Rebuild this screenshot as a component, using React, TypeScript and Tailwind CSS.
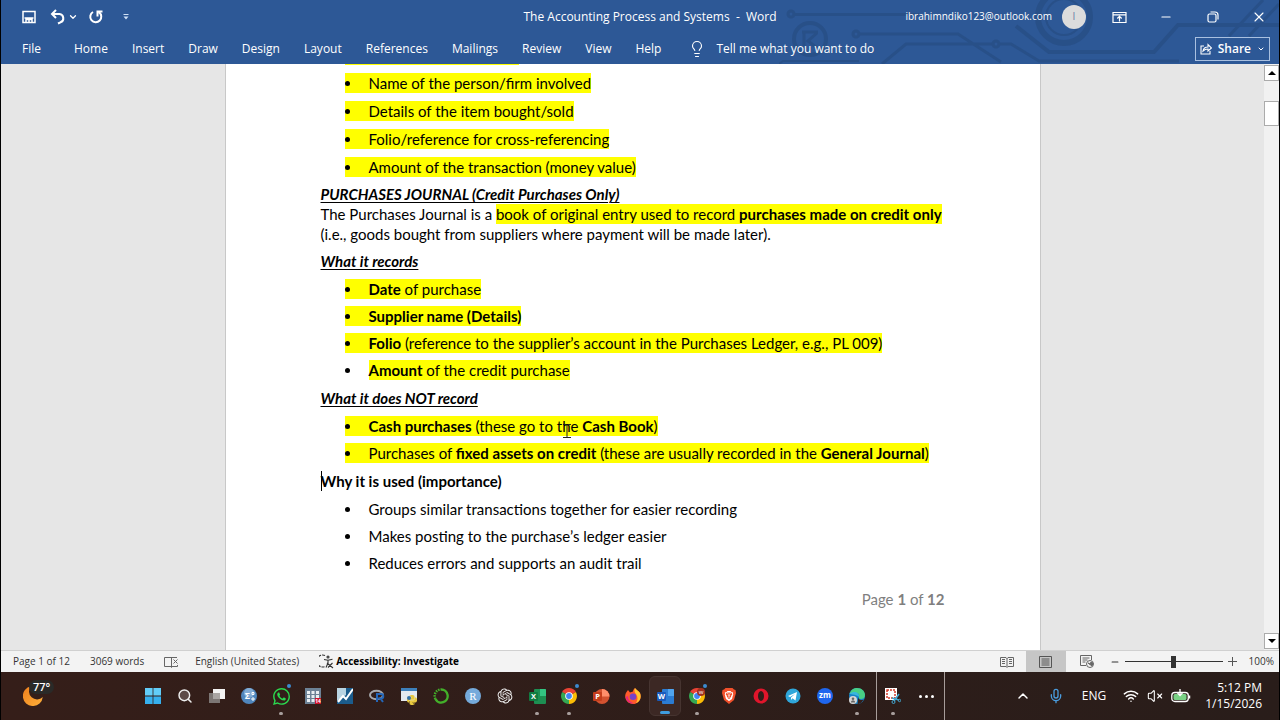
import type { ReactNode } from 'react';
import { ChevronDown, ChevronUp, Lightbulb, Mic, Minus, Search, VolumeX, Wifi, X } from 'lucide-react';
import { RiOpenaiFill } from 'react-icons/ri';
import { SiBrave, SiPython, SiWhatsapp } from 'react-icons/si';

const tabs = ['Home', 'Insert', 'Draw', 'Design', 'Layout', 'References', 'Mailings', 'Review', 'View', 'Help'];

function CircuitPattern() {
  return (
    <svg
      className="pointer-events-none absolute right-0 top-0 h-full w-[500px]"
      viewBox="0 0 500 64"
      fill="none"
      stroke="#264b80"
      strokeWidth="3"
      opacity="0.6"
    >
      <circle cx="12" cy="14" r="3" />
      <path d="M15 14.500H140" />
      <circle cx="31" cy="39" r="16" strokeWidth="4" />
      <path d="M23 32h16M25 32v14M38 33l-9 8 9 7" />
      <path d="M0 64L4 61H80" strokeWidth="2" />
      <circle cx="77" cy="34" r="3" />
      <path d="M80 34H179L222 62M103 64L127 44H213" />
      <path d="M221 44H232L260 61H400" />
      <circle cx="217" cy="44" r="3" />
      <path d="M237 26L270 52H375L399 25H500" strokeWidth="4" />
      <circle cx="285" cy="17" r="26" strokeWidth="6" />
      <circle cx="285" cy="17" r="18" strokeWidth="2" />
      <path d="M450 36L484 0M470 36L500 4" />
    </svg>
  );
}

function TitleBar() {
  return (
    <div className="relative flex h-[34px] items-center text-xs">
      <div className="flex flex-1 items-center pl-5">
        <button aria-label="Save" className="flex w-[28px] items-center">
          <svg className="size-4" viewBox="0 0 16 16" fill="none" stroke="white" strokeWidth="1.500">
            <path d="M2 2.500h12v11H2zM3.500 9h9M5 13.500v-3h6v3M8 11v2.500" />
          </svg>
        </button>
        <button aria-label="Undo" className="flex w-[19px] items-center">
          <svg className="size-[18px]" viewBox="0 0 18 18" fill="none" stroke="white" strokeWidth="2">
            <path d="M7 2L3 6l4 4M3 6h7.500a4.300 4.300 0 0 1 1 8.300L9 15.500" />
          </svg>
        </button>
        <button aria-label="Undo options" className="flex w-[19px] items-center">
          <ChevronDown className="size-2.5" strokeWidth={3} />
        </button>
        <button aria-label="Redo" className="flex w-[35px] items-center">
          <svg className="size-[18px]" viewBox="0 0 18 18" fill="none" stroke="white" strokeWidth="2">
            <path d="M6 4a5.500 5.500 0 1 0 6 .3M10.500 8.500V3.500h5" />
          </svg>
        </button>
        <button aria-label="Customize toolbar">
          <svg className="size-2" viewBox="0 0 8 8" fill="#cfe0f5">
            <path d="M1.500 1h5v1h-5zM1.500 3.500h5L4 6.500z" />
          </svg>
        </button>
      </div>
      <h1 className="whitespace-pre">The Accounting Process and Systems  -  Word</h1>
      <div className="flex flex-1 items-center justify-end">
        <span className="text-[10px]">ibrahimndiko123@outlook.com</span>
        <span className="ml-2.5 mr-[26px] flex size-6 items-center justify-center rounded-full bg-[#dcdcdc] text-[10px] text-[#6b7fa5]">
          I
        </span>
        <button aria-label="Ribbon display options" className="mr-8">
          <svg className="size-[15px]" viewBox="0 0 15 15" fill="none" stroke="white" strokeWidth="1.200">
            <path d="M1 2.500h13v10H1zM1 4.800h13M7.500 11.500V6.500M5.300 8.500l2.200-2.200 2.200 2.200" />
          </svg>
        </button>
        <button aria-label="Minimize" className="mr-[34px]">
          <Minus className="size-3.5" strokeWidth={2} />
        </button>
        <button aria-label="Restore" className="mr-8">
          <svg className="size-3" viewBox="0 0 12 12" fill="none" stroke="white" strokeWidth="1.200">
            <rect x="1" y="3" width="8" height="8" rx="1.500" />
            <path d="M3.500 1h4.500a3 3 0 0 1 3 3v4.500" />
          </svg>
        </button>
        <button aria-label="Close" className="mr-3">
          <X className="size-4" strokeWidth={1.6} />
        </button>
      </div>
    </div>
  );
}

function Ribbon() {
  return (
    <nav className="relative flex h-[30px] items-center text-xs">
      <button className="ml-[21px] mr-[33px]">File</button>
      <div className="flex gap-6">
        {tabs.map(tab => (
          <button key={tab}>{tab}</button>
        ))}
      </div>
      <button className="ml-[27px] flex items-center gap-2.5">
        <Lightbulb className="size-[18px]" strokeWidth={1.5} />
        Tell me what you want to do
      </button>
      <button className="ml-auto mr-[9px] flex h-6 items-center gap-1.5 border border-[#a9c0e0] px-1 text-xs font-semibold">
        <svg className="size-3" viewBox="0 0 12 12" fill="none" stroke="white" strokeWidth="1.100">
          <path d="M4 3H1v8h9V8M3 8c.5-3 2-4 5-4V1.500L11.500 5 8 8V6C6 6 4.500 6.500 3 8z" />
        </svg>
        Share
        <ChevronDown className="size-2" strokeWidth={3} />
      </button>
    </nav>
  );
}

function Mark({ children }: { children: ReactNode }) {
  return <mark className="bg-[#ffff00] py-px text-inherit">{children}</mark>;
}

function Item({ children, highlight = 'all' }: { children: ReactNode; highlight?: 'all' | 'text' | 'none' }) {
  return (
    <li className="flex">
      <span className={`flex items-center ${highlight === 'all' ? 'bg-[#ffff00]' : ''}`}>
        <span className="flex w-6">
          <span className="size-[5px] rounded-full bg-black" />
        </span>
        <span>{highlight === 'text' ? <Mark>{children}</Mark> : children}</span>
      </span>
    </li>
  );
}

function Heading({ children }: { children: ReactNode }) {
  return <h2 className="font-bold italic underline decoration-1 underline-offset-2">{children}</h2>;
}

function TextCursor() {
  return (
    <svg className="absolute -bottom-1 left-1.5 h-4 w-2" viewBox="0 0 8 16" fill="none" stroke="#222">
      <path d="M0 1.500h3l1 1 1-1h3M4 2v12M0 14.500h8" />
    </svg>
  );
}

function Document() {
  return (
    <article className="mx-auto flex w-[816px] flex-col justify-end overflow-hidden border-x border-[#c8c8c8] bg-white px-[95px] pb-[41px] font-['Lato',sans-serif] text-[15px] leading-5 text-black">
      {/* tail of the highlighted line above the fold */}
      <div className="ml-6 h-0.5 w-[174px] bg-[#ffff00]" />
      <ul className="mb-[7px] ml-6 mt-2 space-y-2">
        <Item>Name of the person/firm involved</Item>
        <Item>Details of the item bought/sold</Item>
        <Item>Folio/reference for cross-referencing</Item>
        <Item>Amount of the transaction (money value)</Item>
      </ul>
      <Heading>PURCHASES JOURNAL (Credit Purchases Only)</Heading>
      <p className="mb-[7px]">
        The Purchases Journal is a{' '}
        <Mark>
          book of original entry used to record <b>purchases made on credit only</b>
        </Mark>{' '}
        (i.e., goods bought from suppliers where payment will be made later).
      </p>
      <Heading>What it records</Heading>
      <ul className="mb-2 ml-6 mt-2 space-y-[7px]">
        <Item>
          <b>Date</b> of purchase
        </Item>
        <Item>
          <b>Supplier name (Details)</b>
        </Item>
        <Item>
          <b>Folio</b> (reference to the supplier’s account in the Purchases Ledger, e.g., PL 009)
        </Item>
        <Item highlight="text">
          <b>Amount</b> of the credit purchase
        </Item>
      </ul>
      <Heading>What it does NOT record</Heading>
      <ul className="mb-2 ml-6 mt-2 space-y-[7px]">
        <Item>
          <b>Cash purchases</b> (these go to{' '}
          <span className="relative">
            the
            <TextCursor />
          </span>{' '}
          <b>Cash Book</b>)
        </Item>
        <Item>
          Purchases of <b>fixed assets on credit</b> (these are usually recorded in the <b>General Journal</b>)
        </Item>
      </ul>
      <h2 className="relative font-bold">
        <span className="absolute inset-y-0 left-0 w-px bg-black" />
        Why it is used (importance)
      </h2>
      <ul className="ml-6 mt-2 space-y-[7px]">
        <Item highlight="none">Groups similar transactions together for easier recording</Item>
        <Item highlight="none">Makes posting to the purchase’s ledger easier</Item>
        <Item highlight="none">Reduces errors and supports an audit trail</Item>
      </ul>
      <footer className="mt-4 text-right text-[#7f7f7f]">
        Page <b>1</b> of <b>12</b>
      </footer>
    </article>
  );
}

function ScrollBar() {
  return (
    <div className="flex w-[15px] flex-col bg-[#f1f1f1]">
      <button
        aria-label="Scroll up"
        className="mt-px flex h-4 items-center justify-center border border-[#ababab] bg-white"
      >
        <svg className="h-1 w-2" viewBox="0 0 8 4">
          <path d="M0 4L4 0l4 4z" />
        </svg>
      </button>
      <div className="mt-5 h-[25px] border border-[#ababab] bg-white" />
      <button
        aria-label="Scroll down"
        className="mb-px mt-auto flex h-4 items-center justify-center border border-[#ababab] bg-white"
      >
        <svg className="h-1 w-2" viewBox="0 0 8 4">
          <path d="M0 0l4 4 4-4z" />
        </svg>
      </button>
    </div>
  );
}

function StatusBar() {
  return (
    <div className="flex h-[22px] items-center border-t border-[#d0d0d0] bg-[#f3f3f3] pl-3 text-[10px] text-[#333]">
      <span className="mr-5">Page 1 of 12</span>
      <span className="mr-5">3069 words</span>
      <svg className="mr-4 h-3 w-[15px]" viewBox="0 0 15 12" fill="none" stroke="#666">
        <path d="M7 1.500H.5v9H7l.5 1 .5-1h5.500V9M7.500 2v9M7 1.500h1M13 1.500H8M9.500 3.500l4 4M13.500 3.500l-4 4" />
      </svg>
      <span className="mr-5">English (United States)</span>
      <svg className="mr-0.5 size-[15px]" viewBox="0 0 15 15" fill="none" stroke="#333" strokeWidth="1.100">
        <path d="M6 1.500A6 6 0 1 0 6 12.500" strokeDasharray="3 1" />
        <circle cx="9" cy="3" r="1" />
        <path d="M5 5.500l4 .8 4.500-1M9 6.500V9l-2 4.500M8 9l6 5M13.500 9L9 13.500" />
      </svg>
      <b className="text-black">Accessibility: Investigate</b>
      <div className="ml-auto flex h-full items-center">
        <button aria-label="Read mode" className="mr-3">
          <svg className="h-3 w-[14px]" viewBox="0 0 14 12" fill="none" stroke="#666">
            <path d="M.5 1.500H6l1 1 1-1h5.500v9H8l-1 1-1-1H.5zM7 2v9M2 3.500h3M2 5.500h3M2 7.500h3M9 3.500h3M9 5.500h3M9 7.500h3" />
          </svg>
        </button>
        <button aria-label="Print layout" className="flex h-full w-10 items-center justify-center bg-[#c6c6c6]">
          <svg className="h-3 w-[13px]" viewBox="0 0 13 12" fill="none" stroke="#555">
            <path d="M.5.5h12v11H.5zM2.500 3h8M2.500 5h8M2.500 7h8M2.500 9h8" />
          </svg>
        </button>
        <button aria-label="Web layout" className="ml-[14px] mr-4">
          <svg className="h-[13px] w-[14px]" viewBox="0 0 14 13" fill="none" stroke="#666">
            <path d="M6 10.500H.5V.5h11V5M2.500 3h7M2.500 5h5M2.500 7h3" />
            <circle cx="10" cy="9" r="3.500" />
            <path d="M8 8l2 1 1-2 2 1-1 3z" fill="#666" />
          </svg>
        </button>
        <button aria-label="Zoom out">
          <Minus className="size-[10px]" strokeWidth={2.5} />
        </button>
        <input
          type="range"
          aria-label="Zoom"
          min="10"
          max="190"
          defaultValue="100"
          className="mx-[5px] h-3 w-[98px] appearance-none bg-[linear-gradient(#333,#333)] bg-[length:100%_1px] bg-center bg-no-repeat [&::-webkit-slider-thumb]:h-3 [&::-webkit-slider-thumb]:w-[5px] [&::-webkit-slider-thumb]:appearance-none [&::-webkit-slider-thumb]:bg-[#333]"
        />
        <button aria-label="Zoom in">
          <svg className="size-[9px]" viewBox="0 0 9 9" stroke="#555">
            <path d="M4.500 0v9M0 4.500h9" />
          </svg>
        </button>
        <span className="ml-3 mr-[5px]">100%</span>
      </div>
    </div>
  );
}

function Chrome() {
  return (
    <svg className="size-4" viewBox="0 0 16 16">
      <path d="M8 8L1.100 4A8 8 0 0 1 14.900 4z" fill="#ea4335" />
      <path d="M8 8l6.900-4A8 8 0 0 1 8 16z" fill="#fbbc05" />
      <path d="M8 8v8A8 8 0 0 1 1.100 4z" fill="#34a853" />
      <circle cx="8" cy="8" r="3.800" fill="white" />
      <circle cx="8" cy="8" r="2.900" fill="#4285f4" />
    </svg>
  );
}

function OfficeIcon({ letter, dark, mid, light }: { letter: string; dark: string; mid: string; light: string }) {
  return (
    <svg className="size-[17px]" viewBox="0 0 17 17">
      <rect x="5" y="1" width="12" height="15" rx="1" fill={mid} />
      <path d="M11 1h5a1 1 0 0 1 1 1v6h-6z" fill={light} />
      <rect x="0" y="4" width="9" height="9" rx="1" fill={dark} />
      <text x="4.500" y="11" fontSize="7.500" fontWeight="700" textAnchor="middle" fill="white">
        {letter}
      </text>
    </svg>
  );
}

const apps: { name: string; icon: ReactNode; dot?: boolean; badge?: boolean; active?: boolean }[] = [
  {
    name: 'Start',
    icon: (
      <svg className="size-4" viewBox="0 0 16 16">
        <path d="M0 0h7.600v7.600H0zM8.400 0H16v7.600H8.400z" fill="#62cdf8" />
        <path d="M0 8.400h7.600V16H0zM8.400 8.400H16V16H8.400z" fill="#36b0ee" />
      </svg>
    ),
  },
  { name: 'Search', icon: <Search className="size-4 fill-[#5d4b48] text-[#eee]" strokeWidth={2.2} /> },
  {
    name: 'Task view',
    icon: (
      <svg className="size-4" viewBox="0 0 16 16">
        <rect x="4" y="1" width="12" height="10" fill="#f3f3f3" />
        <rect y="5" width="11" height="10" fill="#7c7674" />
        <path d="M4 5h7v6H4z" fill="#a9a5a3" />
      </svg>
    ),
  },
  {
    name: 'SPSS',
    icon: (
      <svg className="size-4" viewBox="0 0 16 16">
        <circle cx="8" cy="8" r="8" fill="#4f86bd" />
        <circle cx="8" cy="5" r="5" fill="#81abd4" />
        <text x="6.500" y="11" fontSize="9" fontWeight="700" textAnchor="middle" fill="white">
          Σ
        </text>
        <path d="M11 4.500h2v2h-2zM10 11h4M12 9v4" stroke="white" fill="none" />
      </svg>
    ),
  },
  { name: 'WhatsApp', icon: <SiWhatsapp className="size-[17px] text-[#2bd94f]" />, dot: true, badge: true },
  {
    name: 'Calendar grid',
    icon: (
      <svg className="size-4" viewBox="0 0 16 16">
        <path d="M0 0h16v16H0z" fill="#6d8296" />
        <path
          d="M2 3h3v3H2zM6.500 3h3v3h-3zM11 3h3v3h-3zM2 7h3v3H2zM6.500 7h3v3h-3zM11 7h3v3h-3zM2 11h3v3H2zM6.500 11h3v3h-3z"
          fill="#e9eef2"
        />
        <path d="M10 10h6v6h-6z" fill="#d0122b" />
        <text x="13" y="15" fontSize="5" fontWeight="700" textAnchor="middle" fill="white">
          14
        </text>
      </svg>
    ),
  },
  {
    name: 'Stata',
    icon: (
      <svg className="size-4" viewBox="0 0 16 16">
        <path d="M0 0h16v16H0z" fill="#1b5c8c" />
        <path d="M0 0h9v7L0 13z" fill="#b9d4e2" />
        <path d="M1 14l5-6 3 3 7-10" stroke="white" strokeWidth="2" fill="none" />
      </svg>
    ),
  },
  {
    name: 'R',
    icon: (
      <svg className="size-4" viewBox="0 0 16 16">
        <ellipse cx="7.500" cy="7" rx="6.500" ry="4.300" fill="none" stroke="#a5a8ad" strokeWidth="2" />
        <path d="M8 14V6h4a2.200 2.200 0 0 1 0 4.500H8M11.500 10.500L14 14" fill="none" stroke="#2466b8" strokeWidth="2" />
      </svg>
    ),
  },
  {
    name: 'IDLE',
    icon: (
      <span className="relative block size-4">
        <span className="block h-[13px] border-t-[3px] border-[#3d80bb] bg-[#e4eaf0]" />
        <SiPython className="absolute -bottom-px right-0 size-2.5 text-[#e8c93f]" />
        <span className="absolute bottom-1 left-1.5 size-1 rounded-full bg-[#3471a8]" />
      </span>
    ),
  },
  {
    name: 'Anaconda',
    icon: (
      <svg className="size-4" viewBox="0 0 16 16" fill="none" stroke="#43b02a">
        <path d="M8 1.500A6.500 6.500 0 1 1 2.400 11" strokeWidth="2.400" />
        <path d="M2.400 11A6.500 6.500 0 0 1 8 1.500" strokeWidth="2.400" strokeDasharray="1.500 1" />
      </svg>
    ),
  },
  {
    name: 'RStudio',
    icon: (
      <span className="flex size-4 items-center justify-center rounded-full bg-[#75aadb] font-['Liberation_Serif',serif] text-[11px] text-white">
        R
      </span>
    ),
  },
  { name: 'ChatGPT', icon: <RiOpenaiFill className="size-[18px] text-[#eee]" /> },
  { name: 'Excel', icon: <OfficeIcon letter="X" dark="#107c41" mid="#1d8f52" light="#33c481" />, dot: true },
  { name: 'Chrome', icon: <Chrome />, dot: true, badge: true },
  {
    name: 'PowerPoint',
    icon: (
      <svg className="size-[17px]" viewBox="0 0 17 17">
        <circle cx="9" cy="8.500" r="7.500" fill="#d35230" />
        <path d="M9 1a7.500 7.500 0 0 1 7.500 7.500H9z" fill="#ff8f6b" />
        <rect x="0" y="4" width="9" height="9" rx="1" fill="#c43e1c" />
        <text x="4.500" y="11" fontSize="7.500" fontWeight="700" textAnchor="middle" fill="white">
          P
        </text>
      </svg>
    ),
  },
  {
    name: 'Firefox',
    icon: (
      <svg className="size-4" viewBox="0 0 16 16">
        <path d="M3 2l2 2.500C6 4 7 4 8 3.500 8 2 9 1 10 0c1 2 4 3 5 5 2.500 6-2 11-7 11S-1 11.500.5 6C1 4.500 2 3.500 3 2z" fill="#ff5a2b" />
        <path d="M10 0c1 2 4 3 5 5 2 5-1 9-4 10 2-3 2-6 0-9C9.500 4.500 9 2 10 0z" fill="#ffc52e" />
        <path d="M.5 9c1 5 5 7 9 6.500C5 14 3 12 3 8z" fill="#e5267c" />
        <circle cx="8" cy="8.700" r="3.300" fill="#7543c9" />
      </svg>
    ),
  },
  {
    name: 'Word',
    icon: <OfficeIcon letter="W" dark="#185abd" mid="#2b7cd3" light="#50a4ee" />,
    active: true,
  },
  {
    name: 'Chrome profile',
    icon: (
      <span className="relative block">
        <Chrome />
        <span className="absolute right-0 top-0 flex size-2 items-center justify-center rounded-full bg-[#a3301f] text-[6px] text-white">
          w
        </span>
      </span>
    ),
    dot: true,
    badge: true,
  },
  {
    name: 'Brave',
    icon: (
      <span className="relative block">
        <svg className="size-4" viewBox="0 0 16 16">
          <path d="M4.500 0h7l1.500 1.500 1.500.5.5 3-2 7-5 4-5-4-2-7 .5-3L3 1.500z" fill="#f1502b" />
        </svg>
        <SiBrave className="absolute left-[3px] top-[3px] size-2.5 text-white" />
      </span>
    ),
  },
  {
    name: 'Opera',
    icon: (
      <svg className="size-4" viewBox="0 0 16 16">
        <path
          d="M8 .5a7.500 7.500 0 1 0 0 15 7.500 7.500 0 0 0 0-15zM8 3c1.800 0 3 2.200 3 5s-1.200 5-3 5-3-2.200-3-5 1.200-5 3-5z"
          fill="#e0152b"
          fillRule="evenodd"
        />
      </svg>
    ),
  },
  {
    name: 'Telegram',
    icon: (
      <svg className="size-4" viewBox="0 0 16 16">
        <circle cx="8" cy="8" r="7.500" fill="#2fa6da" />
        <path d="M3 8l9-4-1.500 8.500-3-2.200L6 12v-2.500L10 6 5 9z" fill="white" />
      </svg>
    ),
  },
  {
    name: 'Zoom',
    icon: (
      <span className="flex size-4 items-center justify-center rounded-full bg-[#1f66ee] pb-px text-[8px] font-bold text-white">
        zm
      </span>
    ),
  },
  {
    name: 'Edge',
    icon: (
      <svg className="size-4" viewBox="0 0 16 16">
        <circle cx="8" cy="8" r="8" fill="#1683c8" />
        <path d="M.5 6C2 1.500 5 0 8 0c5 0 8 3.500 8 7 0 3-2 4-4 4-1.500 0-2.500-.8-2-2 .8-2-.5-4-3-4-3 0-5 1-6.500 1z" fill="#48cf85" />
        <path d="M9.500 8c-.8 3 1.500 5 5 3.500C13 14.500 11 16 8.500 16z" fill="#341f1b" />
        <path d="M.5 6C3 3.500 7 3.500 9 5.500c1.500 1.500 1 3 1 3.500C9 7 2 6 .5 6z" fill="#39b6dc" />
        <circle cx="4" cy="12" r="4" fill="#d6d6d6" />
        <circle cx="4" cy="10.800" r="1.300" fill="#666" />
        <path d="M1.800 14.500c.5-3 4-3 4.400 0z" fill="#666" />
      </svg>
    ),
    dot: true,
  },
];

function AppButton({ name, icon, dot, badge, active }: (typeof apps)[number]) {
  return (
    <button
      aria-label={name}
      className={`relative flex h-10 w-8 items-center justify-center ${
        active ? 'rounded-md border border-[#463430] bg-[#3c2824]' : ''
      }`}
    >
      {icon}
      {badge && <span className="absolute right-1.5 top-2 size-1 rounded-full bg-[#3b8bd0]" />}
      {dot && <span className="absolute bottom-px h-[3px] w-1 rounded-full bg-[#a89f9d]" />}
      {active && <span className="absolute bottom-px h-[3px] w-2.5 rounded-full bg-[#3f9de0]" />}
    </button>
  );
}

function Taskbar() {
  return (
    <div className="flex h-12 items-center bg-gradient-to-r from-[#351e19] to-[#291d1a] text-xs text-white">
      <button aria-label="Weather" className="relative ml-[22px] mr-[94px] h-10 w-5">
        <svg className="size-5" viewBox="0 0 20 20">
          <defs>
            <linearGradient id="moon" x1="0" y1="0" x2="1" y2="1">
              <stop offset="0" stopColor="#f07f1d" />
              <stop offset="1" stopColor="#fdb03a" />
            </linearGradient>
          </defs>
          <path d="M8 .2A10 10 0 1 0 19.800 11 8 8 0 0 1 8 .2z" fill="url(#moon)" />
        </svg>
        <span className="absolute left-1.5 top-1 rounded-full bg-[#2a2a28] px-1 text-[11px] font-semibold leading-[14px]">
          77°
        </span>
      </button>
      {apps.map(app => (
        <AppButton key={app.name} {...app} />
      ))}
      <div className="ml-[3px] flex h-12 w-[69px] items-center border-x border-[#a79d9a]">
        <button aria-label="Snipping tool" className="relative flex h-10 w-8 items-center justify-center">
          <svg className="size-4" viewBox="0 0 16 16" fill="none">
            <path d="M0 0h12v12H0z" fill="white" />
            <path d="M2 2h8v8H2z" stroke="#d23a28" strokeWidth="1.500" strokeDasharray="2 1" />
            <path d="M14 6l-5 7M7 10l7 2" stroke="#43a5cf" strokeWidth="1.500" />
            <circle cx="8.500" cy="14" r="1.500" stroke="#43a5cf" />
            <circle cx="14.500" cy="12.500" r="1.200" stroke="#43a5cf" />
          </svg>
          <span className="absolute bottom-px h-[3px] w-1 rounded-full bg-[#a89f9d]" />
        </button>
        <button aria-label="More apps" className="flex flex-1 justify-center gap-[3px]">
          <i className="size-[3px] rounded-full bg-white" />
          <i className="size-[3px] rounded-full bg-white" />
          <i className="size-[3px] rounded-full bg-white" />
        </button>
      </div>
      <div className="ml-auto flex items-center">
        <button aria-label="Hidden icons" className="mr-[17px]">
          <ChevronUp className="size-4" strokeWidth={2.2} />
        </button>
        <button aria-label="Microphone" className="mr-[18px]">
          <Mic className="size-4 text-[#4a9bdc]" strokeWidth={2} />
        </button>
        <span className="mr-[17px]">ENG</span>
        <button aria-label="Network, sound and battery" className="flex items-center gap-2">
          <Wifi className="size-4" strokeWidth={2.2} />
          <VolumeX className="size-4" strokeWidth={1.6} />
          <svg className="h-4 w-5" viewBox="0 0 20 16" fill="none">
            <rect x=".8" y="4.500" width="16.500" height="9" rx="3" stroke="white" strokeWidth="1.300" />
            <rect x="2.500" y="6" width="13" height="6" rx="1.500" fill="#79d285" />
            <path d="M18.500 7.500v3" stroke="white" strokeWidth="1.500" />
            <path d="M9 1v6M6.500 5L9 7.500 11.500 5" stroke="white" strokeWidth="1.300" />
          </svg>
        </button>
        <div className="ml-3.5 mr-[17px] text-right leading-4">
          <div>5:12 PM</div>
          <div>1/15/2026</div>
        </div>
      </div>
    </div>
  );
}

export default function App() {
  return (
    <div className="flex h-screen flex-col overflow-hidden border-x border-black font-['Open_Sans','Noto_Sans',sans-serif]">
      <header className="relative bg-[#2d5896] text-white">
        <CircuitPattern />
        <TitleBar />
        <Ribbon />
      </header>
      <main className="flex min-h-0 flex-1 bg-[#e6e6e6]">
        <div className="flex min-w-0 flex-1">
          <Document />
        </div>
        <ScrollBar />
      </main>
      <StatusBar />
      <Taskbar />
    </div>
  );
}
